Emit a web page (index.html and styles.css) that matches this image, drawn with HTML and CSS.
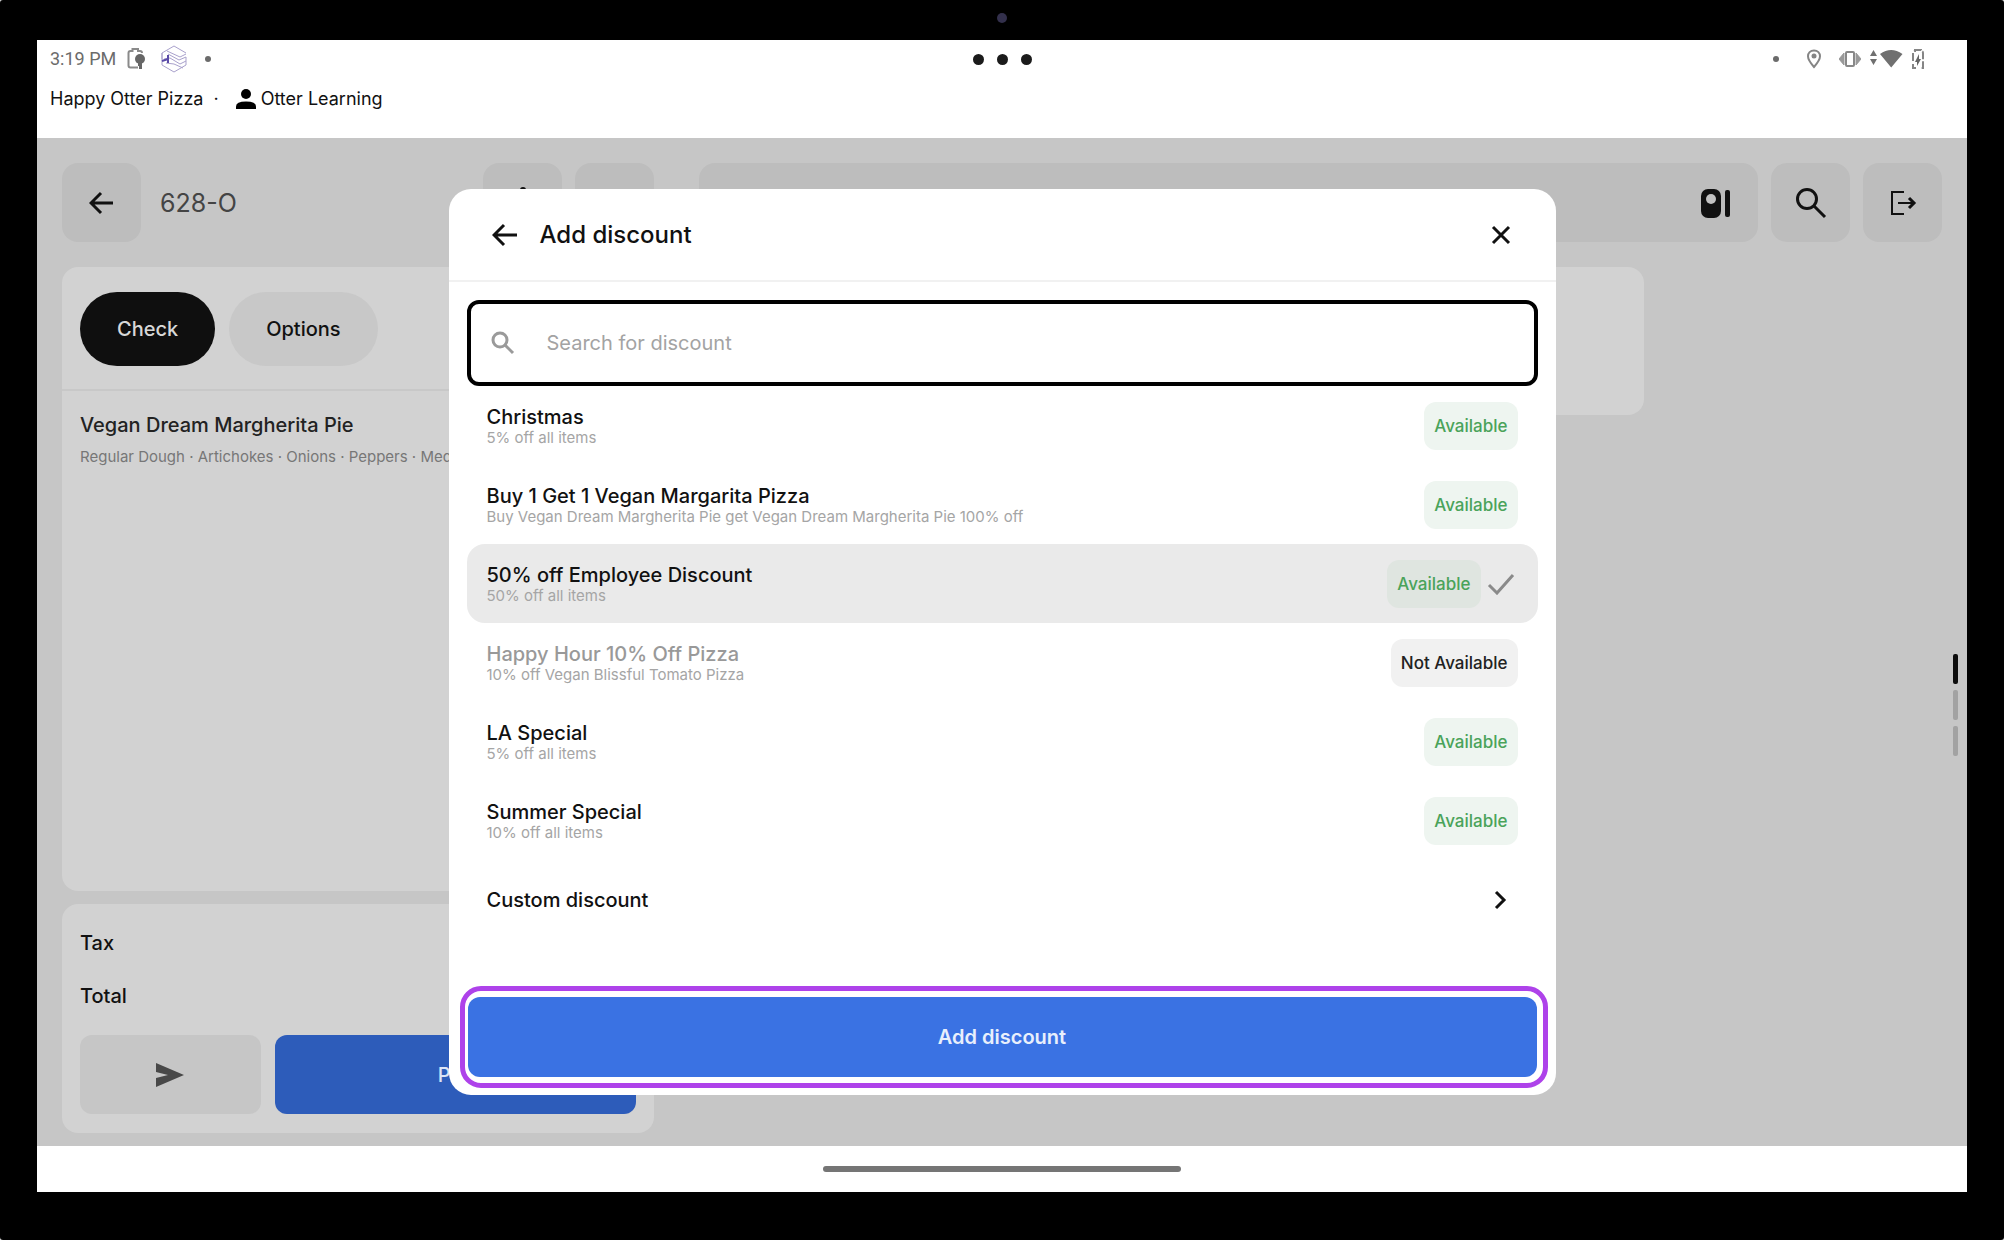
FILE: index.html
```html
<!DOCTYPE html>
<html lang="en">
<head>
<meta charset="utf-8">
<title>Add discount</title>
<meta name="viewport" content="width=device-width, initial-scale=1">
<link rel="stylesheet" href="styles.css">
</head>
<body>
<div class="device">
  <span class="camera"></span>
  <div class="screen">
    <header class="system">
      <div class="status">
        <div class="status-left">
          <span>3:19 PM</span>
          <svg class="status-battery" width="20" height="24" viewBox="0 0 20 24"><path class="battery-outline" d="M11 20.500H3.500Q1.500 20.500 1.500 18.500V6Q1.500 4 3.500 4H5.500V2H11V4H13Q15 4 15 6"/><circle cx="13" cy="12" r="5"/><path d="M11 14h4v8h-3v-3h-1z"/></svg>
          <svg class="status-hex" width="26" height="28" viewBox="0 0 26 28"><path d="M1 14V8L13 1L25 8M1 8V20L13 27L25 20V12M6 6L19 12L25 9M7 9L18 15L25 12M3 14L9 13L19 19L25 16M5 18L13 19L22 23"/><path class="hex-accent" d="M7 10V18M1 16L7 14"/></svg>
          <span class="tiny-dot"></span>
        </div>
        <div class="camera-dots"><i></i><i></i><i></i></div>
        <div class="status-right">
          <span class="tiny-dot"></span>
          <svg class="pin" width="16" height="20" viewBox="0 0 16 20"><path d="M8 1.500C4.300 1.500 2 4 2 7.200C2 11 8 18 8 18S14 11 14 7.200C14 4 11.700 1.500 8 1.500Z" fill="none" stroke="#858585" stroke-width="2"/><circle cx="8" cy="7" r="2.500" fill="#858585"/></svg>
          <svg class="vibrate" width="22" height="18" viewBox="0 0 22 18"><path d="M5 3V15L0 9ZM17 3V15L22 9Z" fill="#999" stroke="#999" stroke-linejoin="round"/><rect x="7" y="2" width="8" height="14" rx="1" fill="#fff" stroke="#888" stroke-width="2"/></svg>
          <svg class="wifi" width="33" height="20" viewBox="0 0 33 20"><path d="M0 7L3.500 1L7 7ZM0 10H7L3.500 16ZM10 5Q21 -3 32.500 5L21.200 18.500Z"/></svg>
          <svg class="charge" width="14" height="22" viewBox="0 0 14 22"><path d="M2 13V5Q2 3 4 3V2H10V3Q12 3 12 5V20H9M2 16V20H5" fill="none" stroke="#858585" stroke-width="2" stroke-dasharray="8 2"/><path d="M8 6L4 14H6V18L10 11H8Z" fill="#666"/></svg>
        </div>
      </div>
      <div class="account">
        <span>Happy Otter Pizza</span>
        <span class="separator">·</span>
        <svg width="22" height="22" viewBox="0 0 22 22"><circle cx="11" cy="6" r="5"/><path d="M1 21V18.500Q1 13.500 11 13.500T21 18.500V21Z"/></svg>
        <span>Otter Learning</span>
      </div>
    </header>

    <main class="app">
      <section class="order">
        <div class="toolbar">
          <button class="tile" aria-label="Back"><svg width="26" height="26" viewBox="0 0 26 26"><path class="line" d="M12 3L2 13L12 23M2 13H24"/></svg></button>
          <h1>628-O</h1>
          <button class="tile" aria-label="More"><svg width="6" height="32" viewBox="0 0 6 32"><circle cx="3" cy="3" r="3"/><circle cx="3" cy="16" r="3"/><circle cx="3" cy="29" r="3"/></svg></button>
          <button class="tile" aria-label="Edit"></button>
        </div>
        <div class="panel check">
          <div class="tabs">
            <button class="pill pill-active">Check</button>
            <button class="pill">Options</button>
          </div>
          <div class="item">
            <h2>Vegan Dream Margherita Pie</h2>
            <p>Regular Dough · Artichokes · Onions · Peppers · Medium</p>
          </div>
        </div>
        <div class="panel totals">
          <div class="total-line">Tax</div>
          <div class="total-line">Total</div>
          <div class="actions">
            <button class="send" aria-label="Send"><svg width="30" height="26" viewBox="0 0 30 26"><path d="M1 1L29 13L1 25V16L13 13L1 10Z" fill="#484848"/></svg></button>
            <button class="pay">Pay</button>
          </div>
        </div>
      </section>
      <section class="menu">
        <div class="toolbar">
          <div class="category"><svg width="32" height="32" viewBox="0 0 32 32"><rect x="1" y="2" width="20" height="29" rx="7"/><circle cx="11" cy="12" r="5" fill="#c2c2c2"/><rect x="25" y="3" width="5" height="27" rx="2"/></svg></div>
          <button class="tile" aria-label="Search"><svg width="32" height="32" viewBox="0 0 32 32"><circle class="line" cx="12" cy="12" r="9.500"/><path class="line" d="M19 19L30 30"/></svg></button>
          <button class="tile" aria-label="Exit"><svg width="28" height="26" viewBox="0 0 28 26"><path class="line thin" d="M15 2H3V24H15M9 13H25"/><path class="line" d="M20 8L25 13L20 18"/></svg></button>
        </div>
        <div class="panel products"></div>
      </section>
      <div class="pager"><i class="current"></i><i></i><i></i></div>

      <div class="overlay">
        <section class="modal" role="dialog" aria-labelledby="modal-title">
          <div class="modal-head">
            <button class="icon-button" aria-label="Go back"><svg width="26" height="26" viewBox="0 0 26 26"><path class="line" d="M12 3L2 13L12 23M2 13H25"/></svg></button>
            <h2 id="modal-title">Add discount</h2>
            <button class="icon-button" aria-label="Close"><svg width="20" height="20" viewBox="0 0 20 20"><path class="line" d="M2 2L18 18M18 2L2 18"/></svg></button>
          </div>
          <div class="modal-body">
            <label class="search">
              <svg class="search-icon" width="24" height="24" viewBox="0 0 24 24"><circle cx="9" cy="9" r="7"/><path d="M14 14L22 22"/></svg>
              <input type="text" placeholder="Search for discount" aria-label="Search for discount">
            </label>
            <ul class="discounts">
              <li><div><h3>Christmas</h3><p>5% off all items</p></div><span class="badge">Available</span></li>
              <li><div><h3>Buy 1 Get 1 Vegan Margarita Pizza</h3><p>Buy Vegan Dream Margherita Pie get Vegan Dream Margherita Pie 100% off</p></div><span class="badge">Available</span></li>
              <li class="selected"><div><h3>50% off Employee Discount</h3><p>50% off all items</p></div><span class="badge">Available</span><svg class="tick" width="28" height="22" viewBox="0 0 28 22"><path d="M2 12L10 20L26 2" fill="none" stroke="#8a8a8a" stroke-width="3"/></svg></li>
              <li class="unavailable"><div><h3>Happy Hour 10% Off Pizza</h3><p>10% off Vegan Blissful Tomato Pizza</p></div><span class="badge">Not Available</span></li>
              <li><div><h3>LA Special</h3><p>5% off all items</p></div><span class="badge">Available</span></li>
              <li><div><h3>Summer Special</h3><p>10% off all items</p></div><span class="badge">Available</span></li>
            </ul>
            <button class="custom">Custom discount<svg width="14" height="20" viewBox="0 0 14 20"><path class="line" d="M3 2L11 10L3 18"/></svg></button>
          </div>
          <div class="highlight"><button class="submit">Add discount</button></div>
        </section>
      </div>
    </main>
    <footer class="nav"><span></span></footer>
  </div>
</div>
</body>
</html>
```
FILE: styles.css
```css
* { box-sizing: border-box; }
body { margin: 0; background: #ddd; font-family: Inter, "Liberation Sans", sans-serif; color: #111; }
h1, h2, h3, p, ul { margin: 0; padding: 0; font-weight: 400; }
button { border: 0; padding: 0; margin: 0; background: none; font: inherit; color: inherit; }
svg { display: block; flex: none; fill: #111; }
.line { fill: none; stroke: #111; stroke-width: 3; }
.thin { stroke-width: 2; }

.device { position: relative; display: flex; min-height: 100vh; padding: 40px 37px 48px; background: #000; border-radius: 3px; }
.camera { position: absolute; top: 13px; left: calc(50% - 5px); width: 10px; height: 10px; border-radius: 50%; background: #33304c; }
.screen { flex: 1; display: flex; flex-direction: column; background: #fff; }

.system { height: 98px; padding: 0 13px; }
.status { display: grid; grid-template-columns: 1fr auto 1fr; align-items: center; height: 38px; font: 18px/24px Roboto, sans-serif; color: #6b6b6b; }
.status-left, .status-right { display: flex; align-items: center; }
.status-battery { margin-left: 11px; fill: #666; }
.battery-outline { fill: none; stroke: #8a8a8a; stroke-width: 2; }
.status-hex { margin: 0 18px 0 14px; fill: none; stroke: #a9a1cc; }
.hex-accent { stroke: #5a4aa8; stroke-width: 2; }
.tiny-dot { width: 6px; height: 6px; border-radius: 50%; background: #6b6b6b; }
.camera-dots { display: flex; gap: 13px; }
.camera-dots i { width: 11px; height: 11px; border-radius: 50%; background: #1b1b1b; }
.status-right { justify-content: flex-end; padding-right: 29px; }
.pin { margin: 0 17px 0 27px; }
.wifi { margin: 0 8px 0 9px; fill: #707070; }
.account { display: flex; align-items: center; height: 42px; font-size: 18px; line-height: 24px; }
.separator { margin: 0 16px 0 10px; }
.account svg { margin-right: 4px; fill: #000; }

.app { position: relative; flex: 1; display: grid; grid-template-columns: 592fr 1243fr; gap: 45px; padding: 25px 25px 13px; background: #c6c6c6; }
.toolbar { display: flex; align-items: center; gap: 13px; height: 79px; }
.tile { display: grid; place-items: center; width: 79px; height: 79px; border-radius: 16px; background: #bdbdbd; }
.toolbar h1 { flex: 1; padding-left: 6px; font-size: 25px; line-height: 32px; color: #444; }
.order, .menu { display: flex; flex-direction: column; gap: 25px; min-width: 0; }
.panel { border-radius: 16px; background: #d2d2d2; }
.check { flex: 1; margin-bottom: -12px; overflow: hidden; }
.tabs { display: flex; gap: 14px; height: 124px; padding: 25px 18px; border-bottom: 2px solid #c8c8c8; }
.pill { height: 74px; padding: 0 37px; border-radius: 37px; background: #c8c8c8; font-size: 20px; font-weight: 500; }
.pill-active { background: #0f0f0f; color: #d8d8d8; }
.item { padding: 20px 18px; white-space: nowrap; }
.item h2 { font-size: 20px; line-height: 28px; font-weight: 500; color: #222; }
.item p { margin-top: 8px; font-size: 15px; line-height: 20px; color: #777; }
.totals { padding: 13px 18px 19px; font-size: 20px; font-weight: 500; }
.total-line { height: 53px; line-height: 53px; }
.actions { display: flex; gap: 14px; margin-top: 12px; }
.send, .pay { display: grid; place-items: center; height: 79px; border-radius: 12px; }
.send { flex: 1; background: #c6c6c6; }
.pay { flex: 2; background: #2d5cba; color: #dce4f5; }
.category { flex: 1; display: flex; align-items: center; justify-content: flex-end; height: 79px; padding-right: 26px; border-radius: 16px; background: #bdbdbd; }
.products { width: 76%; height: 148px; }
.pager { position: absolute; right: 9px; top: 516px; display: grid; gap: 6px; }
.pager i { width: 5px; height: 30px; border-radius: 2px; background: #a2a2a2; }
.pager .current { background: #0c0c0c; }

.overlay { position: absolute; inset: 0; display: grid; place-items: center; }
.modal { width: 100%; max-width: 1107px; border-radius: 22px; background: #fff; }
.modal-head { display: flex; align-items: center; height: 93px; padding: 0 45px 0 43px; border-bottom: 2px solid #f1f1f1; }
.modal-head h2 { flex: 1; padding-left: 22px; font-size: 24px; line-height: 32px; font-weight: 500; }
.icon-button { display: grid; place-items: center; }
.modal-body { padding: 18px 18px 47px; }
.search { display: flex; align-items: center; gap: 32px; height: 86px; padding: 0 20px; border: 4px solid #000; border-radius: 12px; }
.search-icon { fill: none; stroke: #9a9a9a; stroke-width: 3; }
.search input { flex: 1; min-width: 0; border: 0; outline: 0; padding: 0; background: none; font: 20px/28px Inter, sans-serif; color: #111; }
.search input::placeholder { color: #a3a3a3; opacity: 1; }
.discounts { list-style: none; }
.discounts li { display: flex; align-items: center; height: 79px; padding: 0 20px; border-radius: 18px; }
.discounts li > div { flex: 1; }
.discounts h3 { font-size: 20px; line-height: 24px; font-weight: 500; }
.discounts p { font-size: 15px; line-height: 17px; color: #a5a5a5; }
.badge { padding: 12px 10px; border-radius: 12px; background: #eef5f0; font-size: 17px; line-height: 24px; font-weight: 500; color: #4aa35a; }
.discounts .selected { background: #eaeaea; }
.selected .badge { background: #dfe5e0; }
.tick { margin: 0 3px 0 6px; }
.unavailable h3 { color: #999; }
.unavailable .badge { background: #f1f1f1; color: #222; }
.custom { display: flex; align-items: center; justify-content: space-between; width: 100%; height: 79px; padding: 0 31px 0 20px; font-size: 20px; font-weight: 500; }
.highlight { margin: 0 8px 7px 11px; padding: 6px 6px 6px 3px; border: 5px solid #ae42ea; border-radius: 21px; }
.submit { width: 100%; height: 80px; border-radius: 12px; background: #3a72e3; color: #e8effc; font-size: 20px; font-weight: 600; }

.nav { display: grid; place-items: center; height: 46px; }
.nav span { width: 358px; max-width: 50%; height: 6px; border-radius: 3px; background: #757575; }
```
